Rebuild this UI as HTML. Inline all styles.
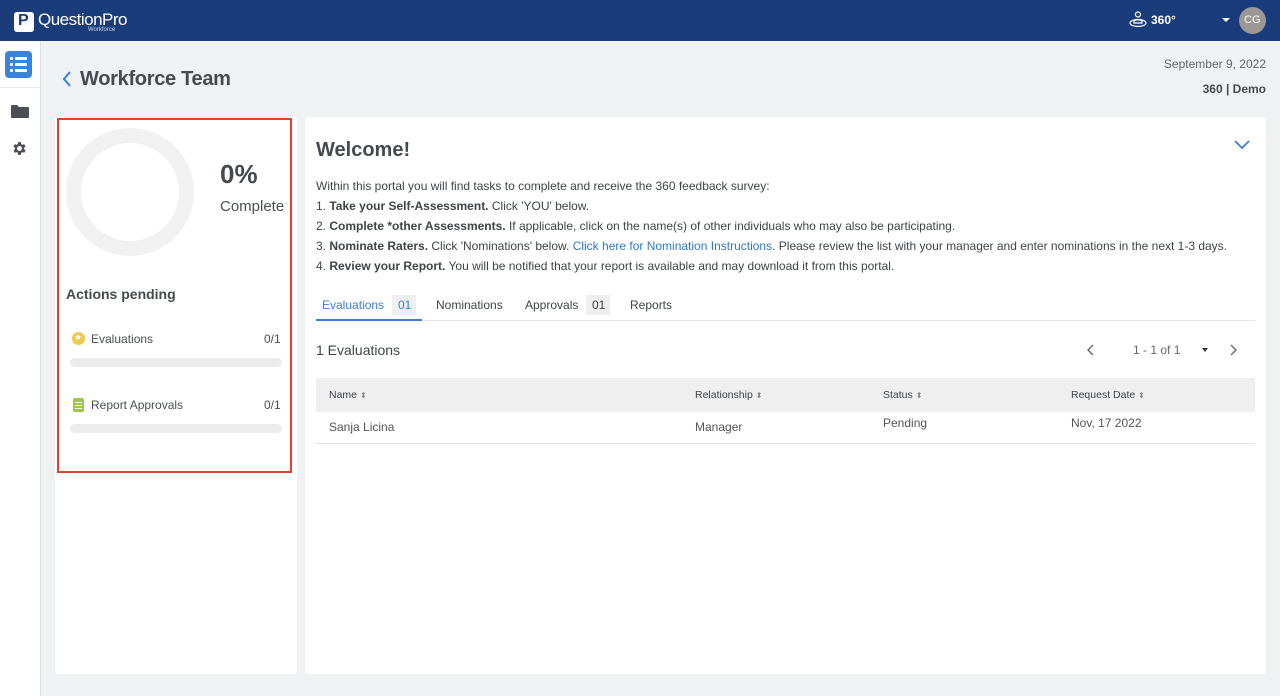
<!DOCTYPE html>
<html><head><meta charset="utf-8"><style>
*{box-sizing:border-box;margin:0;padding:0}
body{width:1280px;height:696px;overflow:hidden;background:#eff1f3;font-family:"Liberation Sans",sans-serif;color:#3f4449;position:relative}
.hdr{position:absolute;left:0;top:0;width:1280px;height:41px;background:#1b3c7a}
.side{position:absolute;left:0;top:41px;width:41px;height:655px;background:#fff;border-right:1px solid #dde0e3}
.abs{position:absolute}
.card{position:absolute;background:#fff;border-radius:3px}
.t{position:absolute;white-space:nowrap}
.bar{position:absolute;height:9px;border-radius:5px;background:#ececec}
.s{font-size:8px;color:#888}
</style></head><body>
<div class="hdr">
 <div class="abs" style="left:14px;top:12px;width:20px;height:20px;background:#fff;border-radius:3px"></div>
 <div class="t" style="left:18px;top:12px;font-size:16px;font-weight:bold;color:#1b3c7a">P</div>
 <div class="t" style="left:38px;top:10px;font-size:17px;color:#fff;letter-spacing:-0.5px">QuestionPro</div>
 <div class="t" style="left:88px;top:27px;font-size:6px;color:#cfd8ea">Workforce</div>
 <svg class="abs" style="left:1128px;top:11px" width="20" height="18" viewBox="0 0 20 18" fill="none" stroke="#fff" stroke-width="1.2"><circle cx="10" cy="3.5" r="2.5"/><path d="M6 11c0-3 8-3 8 0v1H6z"/><ellipse cx="10" cy="12" rx="8" ry="3.5"/></svg>
 <div class="t" style="left:1151px;top:13px;font-size:12px;font-weight:bold;color:#fff">360°</div>
 <div class="abs" style="left:1222px;top:18px;border-left:4px solid transparent;border-right:4px solid transparent;border-top:4px solid #fff"></div>
 <div class="abs" style="left:1239px;top:7px;width:27px;height:27px;border-radius:50%;background:#9b9794"></div>
 <div class="t" style="left:1244px;top:14px;font-size:11px;color:#fff">CG</div>
</div>
<div class="side">
 <div class="abs" style="left:5px;top:10px;width:27px;height:27px;background:#3b82d9;border-radius:4px"></div>
 <svg class="abs" style="left:10px;top:16px" width="17" height="15" viewBox="0 0 17 15" fill="#fff"><rect x="0" y="0" width="3" height="3" rx="1"/><rect x="5" y="0" width="12" height="3" rx="1"/><rect x="0" y="6" width="3" height="3" rx="1"/><rect x="5" y="6" width="12" height="3" rx="1"/><rect x="0" y="12" width="3" height="3" rx="1"/><rect x="5" y="12" width="12" height="3" rx="1"/></svg>
 <div class="abs" style="left:0;top:46px;width:40px;height:1px;background:#e5e7ea"></div>
 <svg class="abs" style="left:11px;top:63px" width="18" height="14" viewBox="0 0 18 14" fill="#4a4f55"><path d="M0 2a1 1 0 0 1 1-1h5l2 2h9a1 1 0 0 1 1 1v9a1 1 0 0 1-1 1H1a1 1 0 0 1-1-1z"/></svg>
 <svg class="abs" style="left:11px;top:99px" width="17" height="17" viewBox="0 0 24 24" fill="#4a4f55"><path d="M19.4 13a7.5 7.5 0 0 0 0-2l2.1-1.6-2-3.5-2.5 1a7 7 0 0 0-1.7-1L15 3h-4l-.4 2.9a7 7 0 0 0-1.7 1l-2.5-1-2 3.5L6.6 11a7.5 7.5 0 0 0 0 2l-2.1 1.6 2 3.5 2.5-1a7 7 0 0 0 1.7 1L11 21h4l.4-2.9a7 7 0 0 0 1.7-1l2.5 1 2-3.5zM13 15.5a3.5 3.5 0 1 1 0-7 3.5 3.5 0 0 1 0 7z" transform="translate(-1 0)"/></svg>
</div>
<svg class="abs" style="left:62px;top:71px" width="10" height="16" viewBox="0 0 10 16" fill="none" stroke="#3b7fd0" stroke-width="2"><path d="M8 1L2 8l6 7"/></svg>
<div class="t" style="left:80px;top:68px;font-size:20px;font-weight:bold;color:#454a50;letter-spacing:-0.3px">Workforce Team</div>
<div class="t" style="right:14px;top:57px;font-size:12px;color:#666">September 9, 2022</div>
<div class="t" style="right:14px;top:82px;font-size:12px;font-weight:bold;color:#454a50">360 | Demo</div>

<div class="card" style="left:55px;top:117px;width:242px;height:557px"></div>
<div class="abs" style="left:57px;top:118px;width:235px;height:355px;border:2px solid #d9452e"></div>
<div class="abs" style="left:66px;top:128px;width:128px;height:128px;border-radius:50%;border:15px solid #f1f1f1"></div>
<div class="t" style="left:220px;top:159px;font-size:26px;font-weight:bold;color:#454a50">0%</div>
<div class="t" style="left:220px;top:198px;font-size:15px;color:#4a4f55">Complete</div>
<div class="t" style="left:66px;top:286px;font-size:14px;font-weight:bold;color:#454a50">Actions pending</div>
<div class="abs" style="left:72px;top:332px;width:13px;height:13px;border-radius:50%;background:#f2c94c"></div>
<div class="t" style="left:74px;top:332px;font-size:9px;color:#fff">★</div>
<div class="t" style="left:91px;top:332px;font-size:12px;color:#4a4f55">Evaluations</div>
<div class="t" style="left:264px;top:332px;font-size:12px;color:#4a4f55">0/1</div>
<div class="bar" style="left:70px;top:358px;width:212px"></div>
<div class="abs" style="left:73px;top:398px;width:11px;height:14px;border-radius:2px;background:#9ec74a"></div>
<div class="abs" style="left:75px;top:402px;width:7px;height:1px;background:#fff;box-shadow:0 3px 0 #fff,0 6px 0 #fff"></div>
<div class="t" style="left:91px;top:398px;font-size:12px;color:#4a4f55">Report Approvals</div>
<div class="t" style="left:264px;top:398px;font-size:12px;color:#4a4f55">0/1</div>
<div class="bar" style="left:70px;top:424px;width:212px"></div>

<div class="card" style="left:305px;top:117px;width:961px;height:557px"></div>
<div class="t" style="left:316px;top:139px;font-size:20px;font-weight:bold;color:#454a50">Welcome!</div>
<svg class="abs" style="left:1234px;top:140px" width="16" height="10" viewBox="0 0 16 10" fill="none" stroke="#3b7fd0" stroke-width="1.8"><path d="M1 1l7 7 7-7"/></svg>
<div class="abs" style="left:316px;top:176px;font-size:12px;line-height:20px;color:#3f4449;white-space:nowrap">
Within this portal you will find tasks to complete and receive the 360 feedback survey:<br>
1. <b>Take your Self-Assessment.</b> Click 'YOU' below.<br>
2. <b>Complete *other Assessments.</b> If applicable, click on the name(s) of other individuals who may also be participating.<br>
3. <b>Nominate Raters.</b> Click 'Nominations' below. <span style="color:#2f78c4">Click here for Nomination Instructions</span>. Please review the list with your manager and enter nominations in the next 1-3 days.<br>
4. <b>Review your Report.</b> You will be notified that your report is available and may download it from this portal.
</div>
<div class="t" style="left:322px;top:298px;font-size:12px;color:#3b7fd0">Evaluations</div>
<div class="abs" style="left:392px;top:295px;width:24px;height:20px;background:#efefef"></div>
<div class="t" style="left:398px;top:298px;font-size:12px;color:#3b7fd0">01</div>
<div class="t" style="left:436px;top:298px;font-size:12px;color:#3f4449">Nominations</div>
<div class="t" style="left:525px;top:298px;font-size:12px;color:#3f4449">Approvals</div>
<div class="abs" style="left:586px;top:295px;width:24px;height:20px;background:#efefef"></div>
<div class="t" style="left:592px;top:298px;font-size:12px;color:#3f4449">01</div>
<div class="t" style="left:630px;top:298px;font-size:12px;color:#3f4449">Reports</div>
<div class="abs" style="left:316px;top:320px;width:939px;height:1px;background:#e3e3e3"></div>
<div class="abs" style="left:316px;top:319px;width:106px;height:2px;background:#3b7fd0"></div>
<div class="t" style="left:316px;top:342px;font-size:14px;color:#3f4449">1 Evaluations</div>
<svg class="abs" style="left:1087px;top:344px" width="8" height="12" viewBox="0 0 8 12" fill="none" stroke="#666" stroke-width="1.4"><path d="M6 1L1 6l5 5"/></svg>
<div class="t" style="left:1133px;top:343px;font-size:12px;color:#666">1 - 1 of 1</div>
<div class="abs" style="left:1202px;top:348px;border-left:3.5px solid transparent;border-right:3.5px solid transparent;border-top:4px solid #333"></div>
<svg class="abs" style="left:1229px;top:344px" width="8" height="12" viewBox="0 0 8 12" fill="none" stroke="#666" stroke-width="1.4"><path d="M2 1l5 5-5 5"/></svg>
<div class="abs" style="left:316px;top:378px;width:939px;height:34px;background:#efefef"></div>
<div class="t" style="left:329px;top:389px;font-size:10.5px;color:#3f4449">Name <span class="s">⬍</span></div>
<div class="t" style="left:695px;top:389px;font-size:10.5px;color:#3f4449">Relationship <span class="s">⬍</span></div>
<div class="t" style="left:883px;top:389px;font-size:10.5px;color:#3f4449">Status <span class="s">⬍</span></div>
<div class="t" style="left:1071px;top:389px;font-size:10.5px;color:#3f4449">Request Date <span class="s">⬍</span></div>
<div class="t" style="left:329px;top:420px;font-size:12px;color:#555">Sanja Licina</div>
<div class="t" style="left:695px;top:420px;font-size:12px;color:#555">Manager</div>
<div class="t" style="left:883px;top:416px;font-size:12px;color:#555">Pending</div>
<div class="t" style="left:1071px;top:416px;font-size:12px;color:#555">Nov, 17 2022</div>
<div class="abs" style="left:316px;top:443px;width:939px;height:1px;background:#e3e3e3"></div>
</body></html>
